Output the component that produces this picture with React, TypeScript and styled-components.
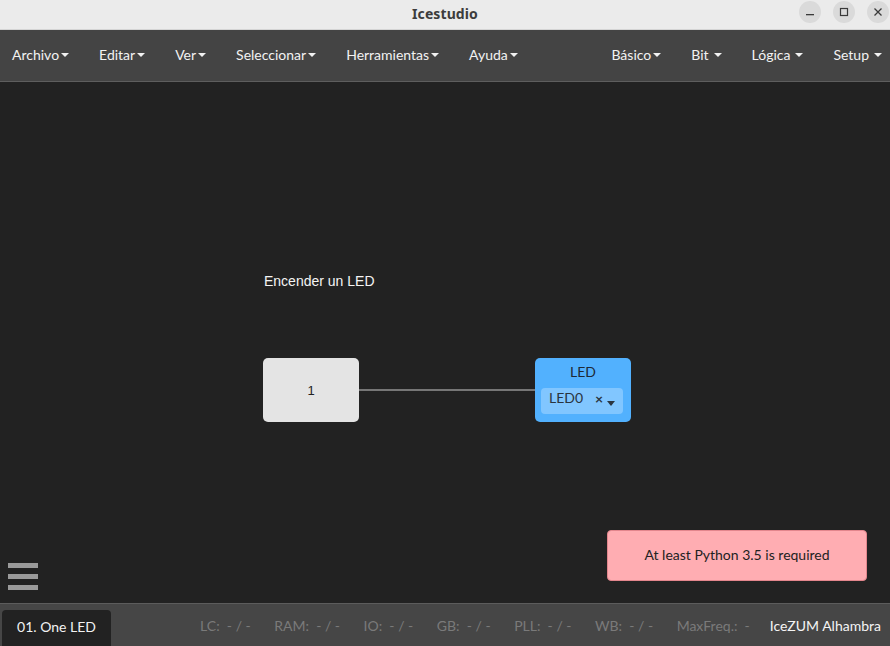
import React from "react";
import styled, { createGlobalStyle } from "styled-components";

const Global = createGlobalStyle`
  html, body { margin: 0; padding: 0; width: 100%; height: 100%; overflow: hidden; }
  #root { width: 890px; height: 646px; }
  * { box-sizing: border-box; }
`;

const Window = styled.div`
  width: 890px;
  height: 646px;
  display: flex;
  flex-direction: column;
  background: #222222;
  font-family: Lato, "Noto Sans", sans-serif;
`;

const TitleBar = styled.div`
  height: 30px;
  flex: none;
  background: #ebebeb;
  border-bottom: 1px solid #d4d4d4;
  display: flex;
  align-items: center;
  justify-content: center;
  position: relative;
  padding-bottom: 2px;
`;

const Title = styled.div`
  font-family: "Noto Sans", "DejaVu Sans", sans-serif;
  font-weight: 700;
  font-size: 14px;
  color: #3c3c3c;
  letter-spacing: 0.1px;
`;

const WinButtons = styled.div`
  position: absolute;
  right: 1px;
  top: 1px;
  display: flex;
  gap: 12px;
`;

const WinBtn = styled.div`
  width: 22px;
  height: 22px;
  border-radius: 50%;
  background: #dadada;
  display: flex;
  align-items: center;
  justify-content: center;
`;

const MenuBar = styled.div`
  height: 52px;
  flex: none;
  background: #444444;
  border-bottom: 1px solid #5e5e5e;
  display: flex;
  align-items: center;
  justify-content: space-between;
  padding: 0 0 2px 0;
`;

const MenuGroup = styled.div`
  display: flex;
  align-items: center;
`;

const MenuItem = styled.div<{ $spaced?: boolean }>`
  color: #f2f2f2;
  font-size: 14px;
  padding: 0 15px;
  display: flex;
  align-items: center;
  gap: ${(p) => (p.$spaced ? "5px" : "2px")};
  &:first-child { padding-left: 12px; }
`;

const RightGroup = styled(MenuGroup)`
  & > div:first-child { padding-left: 15px; }
  & > div:last-child { padding-right: 8px; }
`;

const Caret = styled.span`
  display: inline-block;
  width: 0;
  height: 0;
  border-left: 4px solid transparent;
  border-right: 4px solid transparent;
  border-top: 4px solid #f2f2f2;
  margin-top: 1px;
`;

const Canvas = styled.div`
  flex: 1;
  position: relative;
  background: #222222;
`;

const Comment = styled.div`
  position: absolute;
  left: 264px;
  top: 191px;
  font-family: "Liberation Sans", Arial, sans-serif;
  font-size: 14px;
  color: #f4f4f4;
`;

const Block = styled.div<{ $x: number; $y: number; $bg: string }>`
  position: absolute;
  left: ${(p) => p.$x}px;
  top: ${(p) => p.$y}px;
  width: 96px;
  height: 64px;
  border-radius: 5px;
  background: ${(p) => p.$bg};
  display: flex;
  flex-direction: column;
  align-items: center;
`;

const ConstValue = styled.div`
  margin: auto;
  font-size: 13px;
  color: #222;
  font-family: "Liberation Sans", Arial, sans-serif;
`;

const LedTitle = styled.div`
  margin-top: 5px;
  font-size: 14px;
  color: #1e2a36;
  line-height: 18px;
`;

const PinSelect = styled.div`
  margin-top: 7px;
  margin-right: 2px;
  width: 82px;
  height: 26px;
  border-radius: 4px;
  background: #81c6ff;
  display: flex;
  align-items: center;
  padding: 0 8px;
  font-size: 14px;
  color: #2a3540;
`;

const PinName = styled.span`
  flex: 1;
  margin-top: -7px;
`;

const Clear = styled.span`
  font-size: 14px;
  font-weight: 700;
  color: #2a3540;
  margin-top: -6px;
  margin-right: 4px;
`;

const SelCaret = styled.span`
  width: 0;
  height: 0;
  border-left: 4px solid transparent;
  border-right: 4px solid transparent;
  border-top: 5px solid #2a3540;
  margin-top: 4px;
`;

const Wire = styled.div`
  position: absolute;
  left: 359px;
  top: 307px;
  width: 176px;
  height: 2px;
  background: #777777;
`;

const Toast = styled.div`
  position: absolute;
  left: 607px;
  top: 448px;
  width: 260px;
  height: 51px;
  background: #ffadb2;
  border: 1px solid #e3868d;
  border-radius: 4px;
  display: flex;
  align-items: center;
  justify-content: center;
  font-size: 14px;
  color: #222;
  padding-bottom: 2px;
`;

const Hamburger = styled.div`
  position: absolute;
  left: 8px;
  bottom: 13px;
  width: 30px;
  display: flex;
  flex-direction: column;
  gap: 6px;
`;

const Bar = styled.div`
  height: 5px;
  background: #9a9a9a;
`;

const StatusBar = styled.div`
  height: 43px;
  flex: none;
  background: #464646;
  border-top: 1px solid #5c5c5c;
  display: flex;
  align-items: flex-end;
  padding: 0 9px 0 2px;
`;

const Tab = styled.div`
  height: 36px;
  width: 109px;
  background: #222222;
  border-radius: 4px 4px 0 0;
  color: #f2f2f2;
  font-size: 14px;
  display: flex;
  align-items: center;
  justify-content: center;
  padding-bottom: 4px;
`;

const Stats = styled.div`
  margin-left: auto;
  height: 100%;
  display: flex;
  align-items: center;
  gap: 23.5px;
  font-size: 14px;
`;

const Stat = styled.span`
  color: #7a7a7a;
  white-space: pre;
`;

const Board = styled.span`
  color: #f4f4f4;
  margin-left: -3.5px;
`;

const leftMenus = ["Archivo", "Editar", "Ver", "Seleccionar", "Herramientas", "Ayuda"];
const rightMenus = ["Básico", "Bit", "Lógica", "Setup"];
const stats = ["LC:  - / -", "RAM:  - / -", "IO:  - / -", "GB:  - / -", "PLL:  - / -", "WB:  - / -", "MaxFreq.:  -"];

export default function App() {
  return (
    <>
      <Global />
      <Window>
        <TitleBar>
          <Title>Icestudio</Title>
          <WinButtons>
            <WinBtn>
              <svg width="10" height="10" viewBox="0 0 10 10">
                <rect x="1" y="7" width="8" height="1.3" fill="#3a3a3a" />
              </svg>
            </WinBtn>
            <WinBtn>
              <svg width="10" height="10" viewBox="0 0 10 10">
                <rect x="1.5" y="1.5" width="7" height="7" fill="none" stroke="#3a3a3a" strokeWidth="1.2" />
              </svg>
            </WinBtn>
            <WinBtn>
              <svg width="10" height="10" viewBox="0 0 10 10">
                <path d="M1.5 1.5 L8.5 8.5 M8.5 1.5 L1.5 8.5" stroke="#3a3a3a" strokeWidth="1.3" />
              </svg>
            </WinBtn>
          </WinButtons>
        </TitleBar>
        <MenuBar>
          <MenuGroup>
            {leftMenus.map((m) => (
              <MenuItem key={m}>
                {m}
                <Caret />
              </MenuItem>
            ))}
          </MenuGroup>
          <RightGroup>
            {rightMenus.map((m, i) => (
              <MenuItem key={m} $spaced={i > 0}>
                {m}
                <Caret />
              </MenuItem>
            ))}
          </RightGroup>
        </MenuBar>
        <Canvas>
          <Comment>Encender un LED</Comment>
          <Wire />
          <Block $x={263} $y={276} $bg="#e4e4e4">
            <ConstValue>1</ConstValue>
          </Block>
          <Block $x={535} $y={276} $bg="#52b1fe">
            <LedTitle>LED</LedTitle>
            <PinSelect>
              <PinName>LED0</PinName>
              <Clear>×</Clear>
              <SelCaret />
            </PinSelect>
          </Block>
          <Toast>At least Python 3.5 is required</Toast>
          <Hamburger>
            <Bar />
            <Bar />
            <Bar />
          </Hamburger>
        </Canvas>
        <StatusBar>
          <Tab>01. One LED</Tab>
          <Stats>
            {stats.map((s) => (
              <Stat key={s}>{s}</Stat>
            ))}
            <Board>IceZUM Alhambra</Board>
          </Stats>
        </StatusBar>
      </Window>
    </>
  );
}
